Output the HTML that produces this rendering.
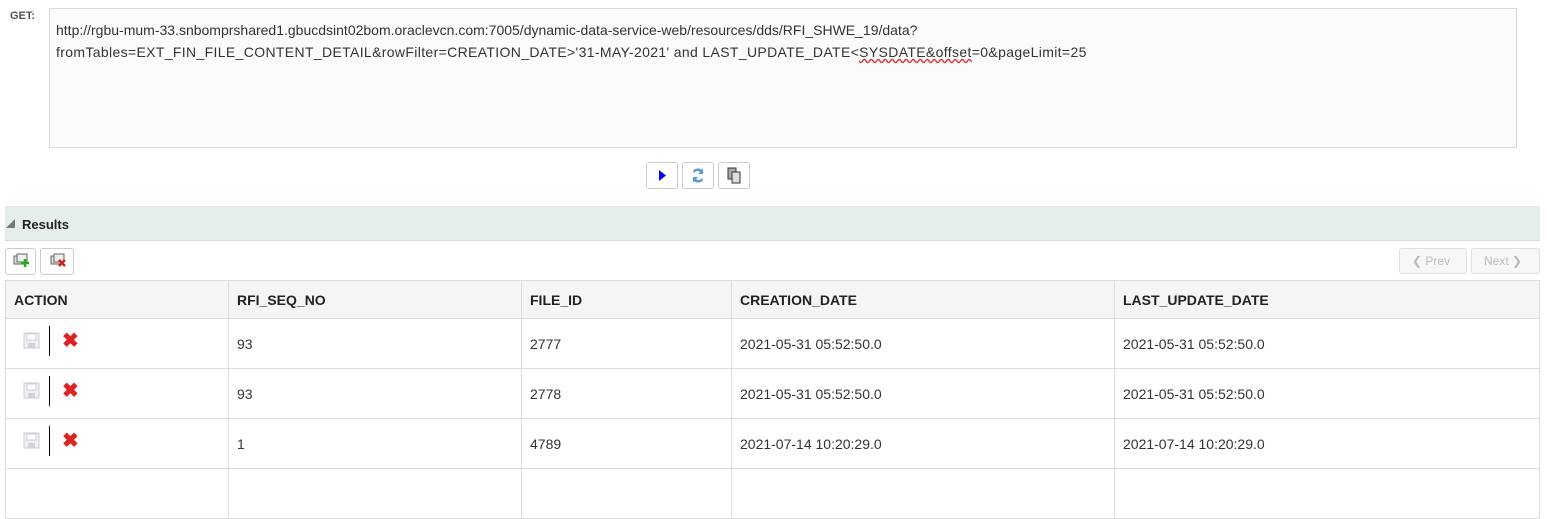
<!DOCTYPE html>
<html><head><style>
*{box-sizing:border-box}
body{margin:0;width:1547px;height:472px;overflow:hidden;background:#fff;font-family:"Liberation Sans",sans-serif;color:#333;position:relative}
.a{position:absolute}
.ta{left:49px;top:8px;width:1468px;height:140px;border:1px solid #dcdcdc;background:#fbfbfb;padding:10px 6px;font-size:14px;line-height:22px;color:#333}
.btn{border:1px solid #ccc;border-radius:3px;background:#fff}
table{border-collapse:collapse;position:absolute;left:5px;top:280px;width:1535px;font-size:14px}
td,th{border:1px solid #ddd;text-align:left;padding:0 8px}
th{background:#f5f5f5;height:38px;font-weight:bold;color:#222;font-size:14px}
td{height:50px;padding-top:0}
.x{color:#d22;font-size:20px;font-weight:bold}
.ac{display:flex;align-items:center;height:50px;margin-top:-6px}
</style></head><body>
<div class="a" style="left:10px;top:10px;font-size:11px;font-weight:bold;color:#555">GET:</div>
<div class="a ta">http://rgbu-mum-33.snbomprshared1.gbucdsint02bom.oraclevcn.com:7005/dynamic-data-service-web/resources/dds/RFI_SHWE_19/data?<br><span style="letter-spacing:0.35px">fromTables=EXT_FIN_FILE_CONTENT_DETAIL&amp;rowFilter=CREATION_DATE&gt;'31-MAY-2021' and LAST_UPDATE_DATE&lt;<span style="text-decoration:underline wavy #d33">SYSDATE&amp;offset</span>=0&amp;pageLimit=25</span></div>
<div class="a btn" style="left:646px;top:162px;width:32px;height:27px"><svg width="30" height="25"><path d="M12 7 L19 12.5 L12 18Z" fill="#0000ee"/></svg></div>
<div class="a btn" style="left:682px;top:162px;width:32px;height:27px"><svg width="30" height="25"><path d="M10 8 a6 6 0 0 1 9 -1 l1 -2 v6 h-5 l2 -2 a4 4 0 0 0 -6 1z M20 17 a6 6 0 0 1 -9 1 l-1 2 v-6 h5 l-2 2 a4 4 0 0 0 6 -1z" fill="#5a9ad0"/></svg></div>
<div class="a btn" style="left:718px;top:162px;width:32px;height:27px"><svg width="30" height="25"><rect x="9" y="5" width="8" height="11" fill="#aaa" stroke="#333"/><rect x="13" y="9" width="8" height="11" fill="#ddd" stroke="#333"/></svg></div>
<div class="a" style="left:5px;top:206px;width:1535px;height:35px;background:#e5eeec;border-bottom:1px solid #d5dcdb"></div>
<div class="a" style="left:6px;top:219px;width:0;height:0;border-left:9px solid transparent;border-bottom:9px solid #777"></div>
<div class="a" style="left:22px;top:217px;font-size:13px;font-weight:bold;color:#222">Results</div>
<div class="a btn" style="left:5px;top:248px;width:31px;height:27px"><svg width="30" height="25"><rect x="8" y="7" width="10" height="8" fill="#ddd" stroke="#666"/><rect x="11" y="5" width="10" height="8" fill="#eee" stroke="#666"/><path d="M15 14h8M19 10v8" stroke="#2a2" stroke-width="2.5"/></svg></div>
<div class="a btn" style="left:40px;top:248px;width:34px;height:27px"><svg width="32" height="25"><rect x="10" y="7" width="10" height="8" fill="#ddd" stroke="#666"/><rect x="13" y="5" width="10" height="8" fill="#eee" stroke="#666"/><path d="M18 11l6 6M24 11l-6 6" stroke="#c22" stroke-width="2.5"/></svg></div>
<div class="a btn" style="left:1399px;top:248px;width:68px;height:26px;border-color:#e0e0e0;background:#f7f7f7;color:#bbb;font-size:12px;padding:5px 12px">❮ Prev</div>
<div class="a btn" style="left:1471px;top:248px;width:69px;height:26px;border-color:#e0e0e0;background:#f7f7f7;color:#bbb;font-size:12px;padding:5px 12px">Next ❯</div>
<table>
<tr><th style="width:223px;height:37px">ACTION</th><th style="width:293px">RFI_SEQ_NO</th><th style="width:210px">FILE_ID</th><th style="width:383px">CREATION_DATE</th><th>LAST_UPDATE_DATE</th></tr>
<tr><td><div class="ac"><svg width="18" height="18" style="margin-left:9px"><rect x="1" y="1" width="15" height="15" fill="#eef0f3" stroke="#c8ccd2"/><rect x="4" y="2" width="9" height="6" fill="#fff" stroke="#d0d0d0"/><rect x="5" y="11" width="7" height="5" fill="#d0d4da"/></svg><span style="display:inline-block;width:1px;height:30px;background:#000;margin:0 12px 0 8px"></span><span class="x">✖</span></div></td><td>93</td><td>2777</td><td>2021-05-31 05:52:50.0</td><td>2021-05-31 05:52:50.0</td></tr>
<tr><td><div class="ac"><svg width="18" height="18" style="margin-left:9px"><rect x="1" y="1" width="15" height="15" fill="#eef0f3" stroke="#c8ccd2"/><rect x="4" y="2" width="9" height="6" fill="#fff" stroke="#d0d0d0"/><rect x="5" y="11" width="7" height="5" fill="#d0d4da"/></svg><span style="display:inline-block;width:1px;height:30px;background:#000;margin:0 12px 0 8px"></span><span class="x">✖</span></div></td><td>93</td><td>2778</td><td>2021-05-31 05:52:50.0</td><td>2021-05-31 05:52:50.0</td></tr>
<tr><td><div class="ac"><svg width="18" height="18" style="margin-left:9px"><rect x="1" y="1" width="15" height="15" fill="#eef0f3" stroke="#c8ccd2"/><rect x="4" y="2" width="9" height="6" fill="#fff" stroke="#d0d0d0"/><rect x="5" y="11" width="7" height="5" fill="#d0d4da"/></svg><span style="display:inline-block;width:1px;height:30px;background:#000;margin:0 12px 0 8px"></span><span class="x">✖</span></div></td><td>1</td><td>4789</td><td>2021-07-14 10:20:29.0</td><td>2021-07-14 10:20:29.0</td></tr>
<tr><td></td><td></td><td></td><td></td><td></td></tr>
</table>
</body></html>
